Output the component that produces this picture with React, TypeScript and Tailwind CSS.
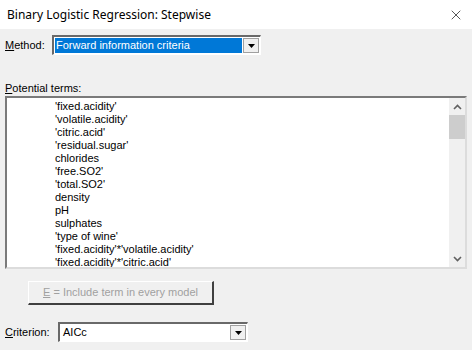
import { X } from "lucide-react";

const terms = [
  "'fixed.acidity'",
  "'volatile.acidity'",
  "'citric.acid'",
  "'residual.sugar'",
  "chlorides",
  "'free.SO2'",
  "'total.SO2'",
  "density",
  "pH",
  "sulphates",
  "'type of wine'",
  "'fixed.acidity'*'volatile.acidity'",
  "'fixed.acidity'*'citric.acid'",
];

function DropArrow() {
  return (
    <svg width="7" height="4" viewBox="0 0 7 4">
      <path d="M0 0h7L3.5 4z" fill="#000" />
    </svg>
  );
}

function Chevron({ up }: { up?: boolean }) {
  return (
    <svg width="9" height="6" viewBox="0 0 9 6">
      <path
        d={up ? "M1 5L4.5 1.5 8 5" : "M1 1L4.5 4.5 8 1"}
        stroke="#606060"
        strokeWidth="1.6"
        fill="none"
      />
    </svg>
  );
}

export default function App() {
  return (
    <div className="w-[472px] h-[350px] bg-[#f0f0f0] font-['Liberation_Sans',sans-serif] text-[11px] text-black overflow-hidden">
      {/* Title bar */}
      <div className="h-[29px] bg-white flex items-center justify-between pl-[7px] pr-[8px]">
        <span className="font-['Noto_Sans',sans-serif] text-[12px]">Binary Logistic Regression: Stepwise</span>
        <X size={16} strokeWidth={1} color="#000" />
      </div>

      {/* Method */}
      <div className="flex items-center mt-[6px] pl-[5px] h-[20px]">
        <span className="w-[47px]">
          <span className="underline">M</span>ethod:
        </span>
        <div className="w-[209px] h-[20px] bg-white border-t-2 border-l-2 border-t-[#696969] border-l-[#696969] border-b border-r border-b-white border-r-white flex items-center p-[1px]">
          <div className="flex-1 h-full bg-[#0078d7] text-white flex items-center pl-[1px]">
            Forward information criteria
          </div>
          <div className="w-[16px] h-full ml-[1px] bg-[#f0f0f0] border border-[#a0a0a0] flex items-center justify-center">
            <DropArrow />
          </div>
        </div>
      </div>

      {/* Potential terms */}
      <div className="mt-[26px] pl-[5px] leading-[14px]">
        <span className="underline">P</span>otential terms:
      </div>
      <div className="mx-[5px] mt-[1px] h-[173px] border-t-2 border-l-2 border-t-[#7a7a7a] border-l-[#7a7a7a] border-b-2 border-r-2 border-b-[#dcdcdc] border-r-[#dcdcdc] bg-white flex">
        <div className="flex-1 pl-[48px] pt-[2px] leading-[13px] overflow-hidden">
          {terms.map((t) => (
            <div key={t}>{t}</div>
          ))}
        </div>
        <div className="w-[16px] bg-[#f0f0f0] flex flex-col items-center">
          <div className="h-[17px] flex items-center justify-center">
            <Chevron up />
          </div>
          <div className="w-full h-[24px] bg-[#cdcdcd]" />
          <div className="flex-1" />
          <div className="h-[17px] flex items-center justify-center">
            <Chevron />
          </div>
        </div>
      </div>

      {/* Include button */}
      <div className="pl-[28px] mt-[12px]">
        <div className="w-[186px] h-[24px] bg-[#f0f0f0] border-t border-l border-t-white border-l-white border-b-2 border-r-2 border-b-[#404040] border-r-[#404040] flex items-center justify-center text-[#a0a0a0]">
          <span>
            <span className="underline">E</span> = Include term in every model
          </span>
        </div>
      </div>

      {/* Criterion */}
      <div className="flex items-center mt-[17px] pl-[5px] h-[20px]">
        <span className="w-[53px]">
          <span className="underline">C</span>riterion:
        </span>
        <div className="w-[190px] h-[20px] bg-white border-t-2 border-l-2 border-t-[#696969] border-l-[#696969] border-b border-r border-b-white border-r-white flex items-center p-[1px]">
          <div className="flex-1 h-full flex items-center pl-[2px]">AICc</div>
          <div className="w-[16px] h-full bg-[#f0f0f0] border border-[#a0a0a0] flex items-center justify-center">
            <DropArrow />
          </div>
        </div>
      </div>
    </div>
  );
}
